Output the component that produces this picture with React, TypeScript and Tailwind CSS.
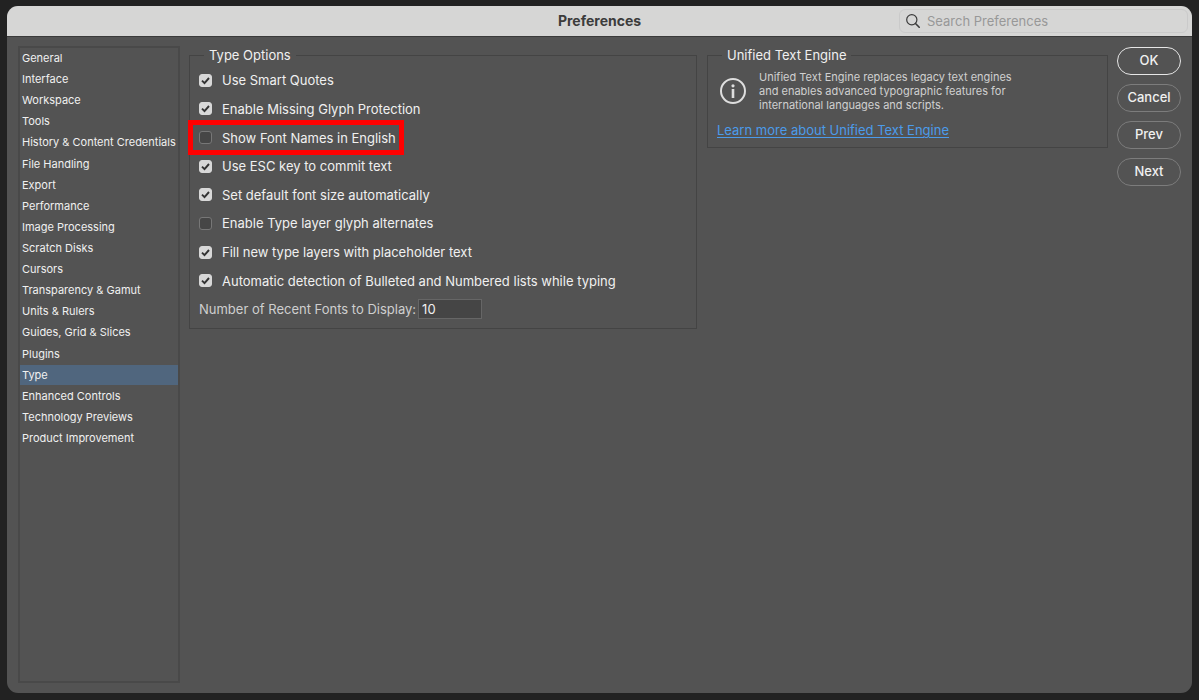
import React from "react";

const categories = [
  "General",
  "Interface",
  "Workspace",
  "Tools",
  "History & Content Credentials",
  "File Handling",
  "Export",
  "Performance",
  "Image Processing",
  "Scratch Disks",
  "Cursors",
  "Transparency & Gamut",
  "Units & Rulers",
  "Guides, Grid & Slices",
  "Plugins",
  "Type",
  "Enhanced Controls",
  "Technology Previews",
  "Product Improvement",
];

const typeOptions = [
  { label: "Use Smart Quotes", checked: true },
  { label: "Enable Missing Glyph Protection", checked: true },
  { label: "Show Font Names in English", checked: false, highlighted: true },
  { label: "Use ESC key to commit text", checked: true },
  { label: "Set default font size automatically", checked: true },
  { label: "Enable Type layer glyph alternates", checked: false },
  { label: "Fill new type layers with placeholder text", checked: true },
  {
    label: "Automatic detection of Bulleted and Numbered lists while typing",
    checked: true,
  },
];

const TitleBar = () => {
  return (
    <header className="grid h-[31px] grid-cols-[1fr_auto_1fr] items-center border-b border-[#3a3a3a] bg-[#d6d6d5] pb-px">
      <h1 className="col-start-2 text-[14px] leading-4 font-bold text-[#3c3c3c]">
        Preferences
      </h1>
      <label className="mr-1 flex h-6 w-[289px] items-center gap-[7px] justify-self-end rounded-md border border-[#cacaca] px-1.5">
        <svg viewBox="0 0 14 14" className="size-3.5" fill="none" stroke="#3c3c3c">
          <circle cx="5.8" cy="5.8" r="5.1" strokeWidth="1.2" />
          <path d="M9.5 9.5 13.2 13.2" strokeWidth="1.6" strokeLinecap="round" />
        </svg>
        <input
          type="search"
          aria-label="Search Preferences"
          placeholder="Search Preferences"
          className="min-w-0 flex-1 bg-transparent text-[13px] leading-4 outline-none placeholder:text-[#989898]"
        />
      </label>
    </header>
  );
};

const Sidebar = () => {
  return (
    <nav className="w-[162px] shrink-0 border-2 border-[#494949]">
      <ul className="flex h-[400px] flex-col justify-between">
        {categories.map((name) => (
          <li key={name}>
            <button
              type="button"
              className={
                name === "Type"
                  ? "block w-full bg-[#50667e] pl-0.5 text-left text-[11px] leading-5 whitespace-nowrap"
                  : "block w-full pl-0.5 text-left text-[11px] leading-5 whitespace-nowrap"
              }
            >
              {name}
            </button>
          </li>
        ))}
      </ul>
    </nav>
  );
};

const Option: React.FC<{
  label: string;
  checked: boolean;
  highlighted?: boolean;
}> = ({ label, checked, highlighted }) => {
  return (
    <li className="flex flex-1">
      <label className="relative flex items-center gap-2.5">
        <span className="grid">
          <input
            type="checkbox"
            defaultChecked={checked}
            className="peer col-start-1 row-start-1 size-[13px] appearance-none rounded-[3px] border border-[#777777] bg-[#464646] checked:border-[#d8d8d8] checked:bg-[#d8d8d8]"
          />
          <svg
            viewBox="0 0 13 13"
            className="pointer-events-none invisible col-start-1 row-start-1 size-[13px] peer-checked:visible"
            fill="none"
            stroke="#333333"
            strokeWidth="1.9"
          >
            <path d="M3 6.6 5.5 9.1 10 4" />
          </svg>
        </span>
        {label}
        {highlighted && (
          <span className="pointer-events-none absolute -inset-y-[3px] -right-2 -left-[11px] border-5 border-[#ff0000]" />
        )}
      </label>
    </li>
  );
};

const TypeOptions = () => {
  return (
    <fieldset className="w-[508px] border border-[#444444] px-[9px] pb-[9px]">
      <legend className="ml-[5px] px-[5px] leading-[18px]">Type Options</legend>
      <ul className="mt-0.5 flex h-[229px] flex-col">
        {typeOptions.map((option) => (
          <Option key={option.label} {...option} />
        ))}
      </ul>
      <div className="mt-1 flex items-center gap-0.5 text-[#cfcfcf]">
        <label htmlFor="recent-fonts">Number of Recent Fonts to Display:</label>
        <input
          id="recent-fonts"
          type="text"
          defaultValue="10"
          className="h-5 w-16 border border-[#666666] bg-[#454545] px-[3px] text-[#f0f0f0] outline-none"
        />
      </div>
    </fieldset>
  );
};

const TextEngine = () => {
  return (
    <fieldset className="min-w-0 flex-1 border border-[#444444] px-[9px] pb-[9px]">
      <legend className="ml-[5px] px-[5px] leading-[18px]">
        Unified Text Engine
      </legend>
      <div className="mt-1.5 flex items-center gap-[13px] pl-[3px]">
        <svg viewBox="0 0 26 26" className="size-[26px]" fill="none" stroke="#dedede">
          <circle cx="13" cy="13" r="12" strokeWidth="2" />
          <path d="M13 11v9" strokeWidth="2.6" />
          <circle cx="13" cy="7.8" r="1.6" fill="#dedede" stroke="none" />
        </svg>
        <p className="w-[260px] text-[11px] leading-[14px] text-[#d0d0d0]">
          Unified Text Engine replaces legacy text engines and enables advanced
          typographic features for international languages and scripts.
        </p>
      </div>
      <a href="#" className="mt-2.5 block w-fit text-[#4b9bea] underline underline-offset-2">
        Learn more about Unified Text Engine
      </a>
    </fieldset>
  );
};

const DialogButtons = () => {
  return (
    <div className="flex w-16 flex-col gap-[9px] pt-px">
      {["OK", "Cancel", "Prev", "Next"].map((name) => (
        <button
          key={name}
          type="button"
          className={
            name === "OK"
              ? "h-7 rounded-full border border-[#e6e6e6] pb-0.5 font-medium"
              : "h-7 rounded-full border border-[#7c7c7c] pb-0.5 font-medium"
          }
        >
          {name}
        </button>
      ))}
    </div>
  );
};

const App = () => {
  return (
    <div className="flex min-h-screen bg-[#222222] px-[7px] pt-1.5 pb-[7px] font-['Inter','Liberation_Sans',sans-serif] text-[13px] leading-4 text-[#f0f0f0]">
      <div className="flex flex-1 flex-col overflow-hidden rounded-[11px] bg-[#535353]">
        <TitleBar />
        <main className="flex flex-1 gap-[9px] px-[11px] pt-[9px] pb-2.5">
          <Sidebar />
          <div className="flex min-w-0 flex-1 items-start gap-2.5">
            <TypeOptions />
            <TextEngine />
          </div>
          <DialogButtons />
        </main>
      </div>
    </div>
  );
};

export default App;
